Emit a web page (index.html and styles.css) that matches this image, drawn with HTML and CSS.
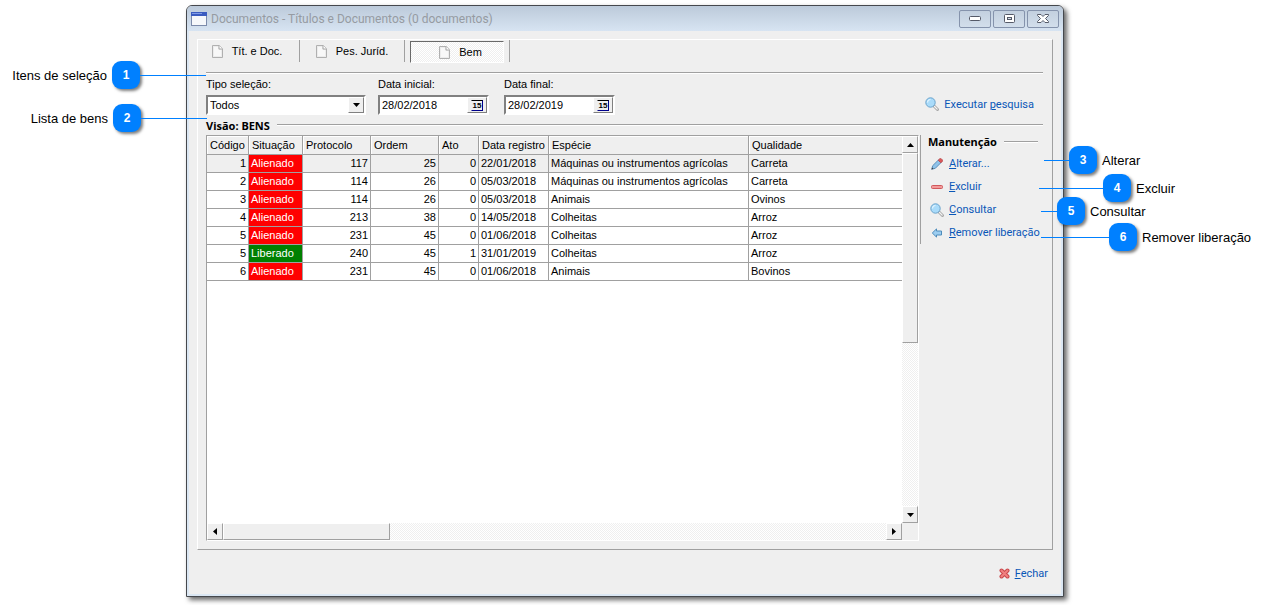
FILE: index.html
```html
<!DOCTYPE html>
<html lang="pt-BR">
<head>
<meta charset="utf-8">
<title>Documentos - Títulos e Documentos</title>
<link rel="stylesheet" href="styles.css">
</head>
<body>
<svg class="defs" width="0" height="0" aria-hidden="true">
  <symbol id="icon-page" viewBox="0 0 11 13">
    <path d="M.5.5h6.8l3.2 3.2v8.8H.5z" fill="#ececec" stroke="#b0b0b0"/>
    <path d="M2 2h4v3h3v6H2z" fill="#f8f8f8"/>
    <path d="M7 .5V4h3.500" fill="#fff" stroke="#a6a6a6"/>
  </symbol>
  <symbol id="icon-search" viewBox="0 0 14 14">
    <path d="M9 9l3.500 3.500" stroke="#a9a9a9" stroke-width="3" stroke-linecap="round"/>
    <path d="M9.500 9.500l2.700 2.700" stroke="#f4f4f4" stroke-width="1.200" stroke-linecap="round"/>
    <circle cx="5.500" cy="5.500" r="4.700" fill="#a9dbfa" stroke="#6aa3cc"/>
    <path d="M2.500 5.500a3 3 0 0 1 3-3" fill="none" stroke="#e4f5ff" stroke-width="1.200"/>
  </symbol>
  <symbol id="icon-pencil" viewBox="0 0 12 12">
    <path d="M.7 11.300l1-3.600 5.800-5.800 2.600 2.600-5.800 5.800z" fill="#8fc3ea" stroke="#4f86b5" stroke-width=".9"/>
    <path d="M7.200 2.200L8.800.7h1.400l1.200 1.200v1.300L9.900 4.800z" fill="#dd5a5c" stroke="#b94446" stroke-width=".8"/>
    <path d="M.5 11.500l.7-2 1.400 1.300z" fill="#444"/>
  </symbol>
  <symbol id="icon-minus" viewBox="0 0 12 4">
    <rect x=".5" y=".5" width="11" height="3" rx="1" fill="#f29a9a" stroke="#d0585c"/>
  </symbol>
  <symbol id="icon-back" viewBox="0 0 11 10">
    <path d="M.8 5L5 .9V3h5v4H5v2.100z" fill="#9ccdf0" stroke="#4e8cbb"/>
  </symbol>
  <symbol id="icon-close" viewBox="0 0 11 11">
    <path d="M2.500 2.500l6 6M8.500 2.500l-6 6" stroke="#c9484c" stroke-width="4" stroke-linecap="round"/>
    <path d="M2.500 2.500l6 6M8.500 2.500l-6 6" stroke="#f08080" stroke-width="2" stroke-linecap="round"/>
  </symbol>
</svg>

<div class="stage">
  <main class="window">
    <header class="titlebar">
      <svg class="app-icon" width="16" height="14" viewBox="0 0 16 14">
        <rect x=".5" y=".5" width="15" height="13" fill="#f6f8fb" stroke="#7c8bab"/>
        <path d="M0 0h16v4H0z" fill="#3b5cc0"/>
        <path d="M1 1h10v1H1z" fill="#7f9ae6"/>
      </svg>
      <h1>Documentos - Títulos e Documentos (0 documentos)</h1>
      <div class="window-buttons">
        <button type="button" aria-label="Minimizar">
          <svg width="12" height="6" viewBox="0 0 12 6"><rect x=".5" y=".5" width="11" height="4" rx="1" fill="#fff" stroke="#555a68"/></svg>
        </button>
        <button type="button" aria-label="Maximizar">
          <svg width="11" height="9" viewBox="0 0 11 9"><rect x=".5" y=".5" width="10" height="8" rx="1" fill="#fff" stroke="#555a68"/><rect x="3.500" y="3.500" width="4" height="2" fill="#d5dfea" stroke="#555a68"/></svg>
        </button>
        <button type="button" aria-label="Fechar janela">
          <svg width="12" height="9" viewBox="0 0 12 9"><path d="M.5.5H4l2 2 2-2h3.500v1L8.500 4.500l3 3v1H8l-2-2-2 2H.5v-1l3-3-3-3z" fill="#fff" stroke="#555a68"/></svg>
        </button>
      </div>
    </header>

    <section class="panel">
      <nav class="tabs">
        <button type="button" class="tab"><svg width="11" height="13"><use href="#icon-page"/></svg>Tít. e Doc.</button>
        <span class="tab-divider"></span>
        <button type="button" class="tab"><svg width="11" height="13"><use href="#icon-page"/></svg>Pes. Juríd.</button>
        <span class="tab-divider"></span>
        <button type="button" class="tab active"><svg width="11" height="13"><use href="#icon-page"/></svg>Bem</button>
        <span class="tab-divider"></span>
      </nav>

      <form class="filters">
        <div class="field field-type">
          <label for="tipo">Tipo seleção:</label>
          <div class="box">
            <select id="tipo"><option>Todos</option></select>
            <span class="drop"><svg width="7" height="4" viewBox="0 0 7 4"><path d="M0 0h7L3.500 4z"/></svg></span>
          </div>
        </div>
        <div class="field">
          <label for="inicial">Data inicial:</label>
          <div class="box">
            <input type="text" id="inicial" value="28/02/2018">
            <button type="button" class="calendar" aria-label="Abrir calendário"><span class="day">15</span></button>
          </div>
        </div>
        <div class="field">
          <label for="final">Data final:</label>
          <div class="box">
            <input type="text" id="final" value="28/02/2019">
            <button type="button" class="calendar" aria-label="Abrir calendário"><span class="day">15</span></button>
          </div>
        </div>
        <a class="action search" href="#"><svg width="14" height="14"><use href="#icon-search"/></svg><span>Executar <u>p</u>esquisa</span></a>
      </form>

      <h2 class="group-title">Visão: BENS</h2>

      <div class="content">
        <div class="grid">
          <div class="grid-body">
            <table>
              <colgroup>
                <col class="c-codigo"><col class="c-situacao"><col class="c-protocolo"><col class="c-ordem">
                <col class="c-ato"><col class="c-data"><col class="c-especie"><col>
              </colgroup>
              <thead>
                <tr><th>Código</th><th>Situação</th><th>Protocolo</th><th>Ordem</th><th>Ato</th><th>Data registro</th><th>Espécie</th><th>Qualidade</th></tr>
              </thead>
              <tbody>
                <tr class="selected"><td class="num">1</td><td class="alienado">Alienado</td><td class="num">117</td><td class="num">25</td><td class="num">0</td><td>22/01/2018</td><td>Máquinas ou instrumentos agrícolas</td><td>Carreta</td></tr>
                <tr><td class="num">2</td><td class="alienado">Alienado</td><td class="num">114</td><td class="num">26</td><td class="num">0</td><td>05/03/2018</td><td>Máquinas ou instrumentos agrícolas</td><td>Carreta</td></tr>
                <tr><td class="num">3</td><td class="alienado">Alienado</td><td class="num">114</td><td class="num">26</td><td class="num">0</td><td>05/03/2018</td><td>Animais</td><td>Ovinos</td></tr>
                <tr><td class="num">4</td><td class="alienado">Alienado</td><td class="num">213</td><td class="num">38</td><td class="num">0</td><td>14/05/2018</td><td>Colheitas</td><td>Arroz</td></tr>
                <tr><td class="num">5</td><td class="alienado">Alienado</td><td class="num">231</td><td class="num">45</td><td class="num">0</td><td>01/06/2018</td><td>Colheitas</td><td>Arroz</td></tr>
                <tr><td class="num">5</td><td class="liberado">Liberado</td><td class="num">240</td><td class="num">45</td><td class="num">1</td><td>31/01/2019</td><td>Colheitas</td><td>Arroz</td></tr>
                <tr><td class="num">6</td><td class="alienado">Alienado</td><td class="num">231</td><td class="num">45</td><td class="num">0</td><td>01/06/2018</td><td>Animais</td><td>Bovinos</td></tr>
              </tbody>
            </table>
          </div>
          <div class="scroll vertical">
            <button type="button" aria-label="Rolar para cima"><svg width="7" height="4" viewBox="0 0 7 4"><path d="M0 4h7L3.500 0z"/></svg></button>
            <div class="thumb"></div>
            <button type="button" class="last" aria-label="Rolar para baixo"><svg width="7" height="4" viewBox="0 0 7 4"><path d="M0 0h7L3.500 4z"/></svg></button>
          </div>
          <div class="scroll horizontal">
            <button type="button" aria-label="Rolar para a esquerda"><svg width="4" height="7" viewBox="0 0 4 7"><path d="M4 0v7L0 3.500z"/></svg></button>
            <div class="thumb"></div>
            <button type="button" class="last" aria-label="Rolar para a direita"><svg width="4" height="7" viewBox="0 0 4 7"><path d="M0 0v7l4-3.500z"/></svg></button>
          </div>
        </div>

        <aside class="side">
          <h2 class="group-title">Manutenção</h2>
          <a class="action" href="#"><svg width="12" height="12"><use href="#icon-pencil"/></svg><span><u>A</u>lterar...</span></a>
          <a class="action" href="#"><svg width="12" height="4"><use href="#icon-minus"/></svg><span><u>E</u>xcluir</span></a>
          <a class="action" href="#"><svg width="14" height="14"><use href="#icon-search"/></svg><span><u>C</u>onsultar</span></a>
          <a class="action" href="#"><svg width="11" height="10"><use href="#icon-back"/></svg><span><u>R</u>emover liberação</span></a>
        </aside>
      </div>
    </section>

    <footer class="footer">
      <a class="action" href="#"><svg width="11" height="11"><use href="#icon-close"/></svg><span><u>F</u>echar</span></a>
    </footer>
  </main>

  <div class="callout left callout-1"><span>Itens de seleção</span><b>1</b><i></i></div>
  <div class="callout left callout-2"><span>Lista de bens</span><b>2</b><i></i></div>
  <div class="callout callout-3"><i></i><b>3</b><span>Alterar</span></div>
  <div class="callout callout-4"><i></i><b>4</b><span>Excluir</span></div>
  <div class="callout callout-5"><i></i><b>5</b><span>Consultar</span></div>
  <div class="callout callout-6"><i></i><b>6</b><span>Remover liberação</span></div>
</div>
</body>
</html>
```
FILE: styles.css
```css
* {
  box-sizing: border-box;
}

body {
  margin: 0;
  background: #fff;
  color: #000;
  font-family: "Liberation Sans", Arial, sans-serif;
  font-size: 11px;
}

svg {
  display: block;
  flex: none;
}

.defs {
  position: absolute;
}

button, input, select {
  font: inherit;
  color: inherit;
  margin: 0;
  padding: 0;
  border-radius: 0;
}

.stage {
  position: relative;
  display: flex;
  min-height: 100vh;
  padding: 5px 200px 8px 186px;
}

/* window */
.window {
  flex: 1;
  min-width: 0;
  display: flex;
  flex-direction: column;
  background: #efefef;
  border: 1px solid #45484d;
  border-radius: 6px 6px 0 0;
  box-shadow: inset 0 0 0 2px #dbe7f3, 3px 3px 5px rgba(0, 0, 0, 0.6);
}

.titlebar {
  display: flex;
  align-items: center;
  height: 25px;
  padding: 0 4px;
  gap: 4px;
  background: linear-gradient(#bccada, #d7e4f2);
  border-radius: 5px 5px 0 0;
}

.titlebar h1 {
  flex: 1;
  margin: 0;
  font: 12px Roboto, Tahoma, sans-serif;
  color: #969ba2;
  white-space: nowrap;
}

.window-buttons {
  display: flex;
  gap: 2px;
}

.window-buttons button {
  display: flex;
  align-items: center;
  justify-content: center;
  width: 32px;
  height: 18px;
  background: linear-gradient(#c3d0df, #d2deeb);
  border: 1px solid #8593ac;
  border-radius: 2px;
}

.panel {
  flex: 1;
  display: flex;
  flex-direction: column;
  margin: 8px 10px 0;
  padding: 0 9px 8px 8px;
  border: 1px solid;
  border-color: #fff #a0a0a0 #a0a0a0 #fff;
}

/* tabs */
.tabs {
  display: flex;
  gap: 5px;
  height: 34px;
  margin-left: -6px;
  box-shadow: inset 0 -1px #fff, inset 0 -2px #a0a0a0;
  clip-path: inset(0 0 0 6px);
}

.tab {
  display: flex;
  align-items: center;
  justify-content: center;
  gap: 9px;
  width: 94px;
  height: 22px;
  background: none;
  border: 0;
}

.tab.active {
  margin-top: 1px;
  padding-left: 7px;
  background: repeating-conic-gradient(#fff 0 25%, #efefef 0 50%) 0 0 / 2px 2px;
  border: 1px solid;
  border-color: #696969 #fff #fff #696969;
}

.tab-divider {
  width: 1px;
  height: 22px;
  background: #a0a0a0;
}

/* filters */
.filters {
  display: flex;
  align-items: flex-end;
  gap: 15px;
}

.field {
  width: 111px;
}

.field-type {
  width: 160px;
  margin-right: -3px;
}

.field label {
  display: block;
  line-height: 21px;
}

.box {
  display: flex;
  position: relative;
  height: 20px;
  background: #fff;
  border: 2px solid;
  border-color: #808080 #fff #fff #808080;
}

.box select, .box input {
  flex: 1;
  min-width: 0;
  border: 0;
  background: none;
  appearance: none;
  padding-left: 2px;
}

.drop, .calendar {
  display: flex;
  align-items: center;
  justify-content: center;
  background: #efefef;
  border: 1px solid;
  border-color: #fff #808080 #808080 #fff;
}

.drop {
  position: absolute;
  top: 0;
  right: 0;
  width: 16px;
  height: 16px;
  pointer-events: none;
}

.calendar {
  width: 20px;
}

.day {
  width: 12px;
  border: 1px solid;
  border-color: #000 #00008b #00008b transparent;
  font-size: 8px;
  font-weight: bold;
  line-height: 9px;
}

/* links with an icon */
.action {
  display: flex;
  align-items: center;
  gap: 5px;
  color: #0a57b8;
  font: 11px Roboto, Tahoma, sans-serif;
  text-decoration: none;
  white-space: nowrap;
}

.search {
  height: 22px;
  margin-left: auto;
  margin-right: 9px;
}

.group-title {
  display: flex;
  align-items: center;
  gap: 7px;
  height: 20px;
  margin: 0;
  font: bold 11px "Noto Sans", Tahoma, sans-serif;
  white-space: nowrap;
}

.group-title::after {
  content: "";
  flex: 1;
  height: 2px;
  background: linear-gradient(#a0a0a0 50%, #fff 50%);
}

.content {
  flex: 1;
  display: flex;
}

/* grid */
.grid {
  flex: 1;
  min-width: 0;
  display: grid;
  grid-template-columns: 1fr 16px;
  grid-template-rows: 1fr 17px;
  border: 1px solid;
  border-color: #a0a0a0 #fff #fff #a0a0a0;
}

.grid-body {
  background: #fff;
  overflow: hidden;
}

table {
  width: 100%;
  table-layout: fixed;
  border-spacing: 0;
}

.c-codigo { width: 42px; }
.c-situacao { width: 54px; }
.c-protocolo, .c-ordem { width: 68px; }
.c-ato { width: 40px; }
.c-data { width: 70px; }
.c-especie { width: 200px; }

th, td {
  height: 18px;
  padding: 0 2px;
  line-height: 17px;
  text-align: left;
  font-weight: normal;
  white-space: nowrap;
  border-right: 1px solid #a0a0a0;
  border-bottom: 1px solid #a0a0a0;
}

th {
  height: 19px;
  padding: 0 3px;
  background: #efefef;
  box-shadow: inset 1px 1px #fff;
}

th:last-child, td:last-child {
  border-right: 0;
}

.num {
  text-align: right;
}

.selected td {
  background: #efefef;
}

tr .alienado {
  background: #f00;
  color: #fff;
}

tr .liberado {
  background: #008000;
  color: #fff;
}

/* scrollbars */
.scroll {
  display: flex;
  background: repeating-conic-gradient(#fff 0 25%, #efefef 0 50%) 0 0 / 2px 2px;
}

.vertical {
  flex-direction: column;
}

.scroll button, .thumb {
  display: flex;
  align-items: center;
  justify-content: center;
  flex: none;
  width: 16px;
  height: 17px;
  background: #efefef;
  border: 1px solid;
  border-color: #fff #a0a0a0 #a0a0a0 #fff;
}

.vertical .thumb {
  height: 49%;
}

.horizontal .thumb {
  width: 24%;
}

.vertical .last {
  margin-top: auto;
}

.horizontal .last {
  margin-left: auto;
}

.side {
  flex: none;
  align-self: flex-start;
  display: flex;
  flex-direction: column;
  width: 123px;
  margin-left: 1px;
  padding: 0 5px 0 7px;
  border-left: 1px solid #a0a0a0;
}

.side .group-title {
  height: 13px;
  margin-bottom: 4px;
}

.side .action {
  height: 23px;
  gap: 3px;
}

.side .action svg {
  width: 18px;
}

.footer {
  display: flex;
  align-items: center;
  justify-content: flex-end;
  height: 46px;
  padding-right: 15px;
}

/* numbered callouts over the window */
.callout {
  position: absolute;
  display: flex;
  align-items: center;
  height: 28px;
  font-size: 13px;
  white-space: nowrap;
}

.callout b {
  width: 28px;
  height: 28px;
  margin-right: 5px;
  border-radius: 9px;
  background: #0080ff;
  box-shadow: 2px 2px 3px rgba(0, 0, 0, 0.5);
  color: #fff;
  font-size: 12px;
  line-height: 28px;
  text-align: center;
}

.callout.left b {
  margin: 0 0 0 5px;
}

.callout i {
  height: 1px;
  background: #0080ff;
}

.callout.left i {
  width: 66px;
}

.callout-1 { top: 61px; right: calc(100% - 206px); }
.callout-2 { top: 104px; right: calc(100% - 207px); }
.callout-3 { top: 146px; left: calc(100% - 220px); }
.callout-4 { top: 174px; left: calc(100% - 225px); }
.callout-5 { top: 197px; left: calc(100% - 223px); }
.callout-6 { top: 223px; left: calc(100% - 223px); }

.callout-3 i { width: 25px; }
.callout-4 i { width: 64px; }
.callout-5 i { width: 16px; }
.callout-6 i { width: 68px; }
```
